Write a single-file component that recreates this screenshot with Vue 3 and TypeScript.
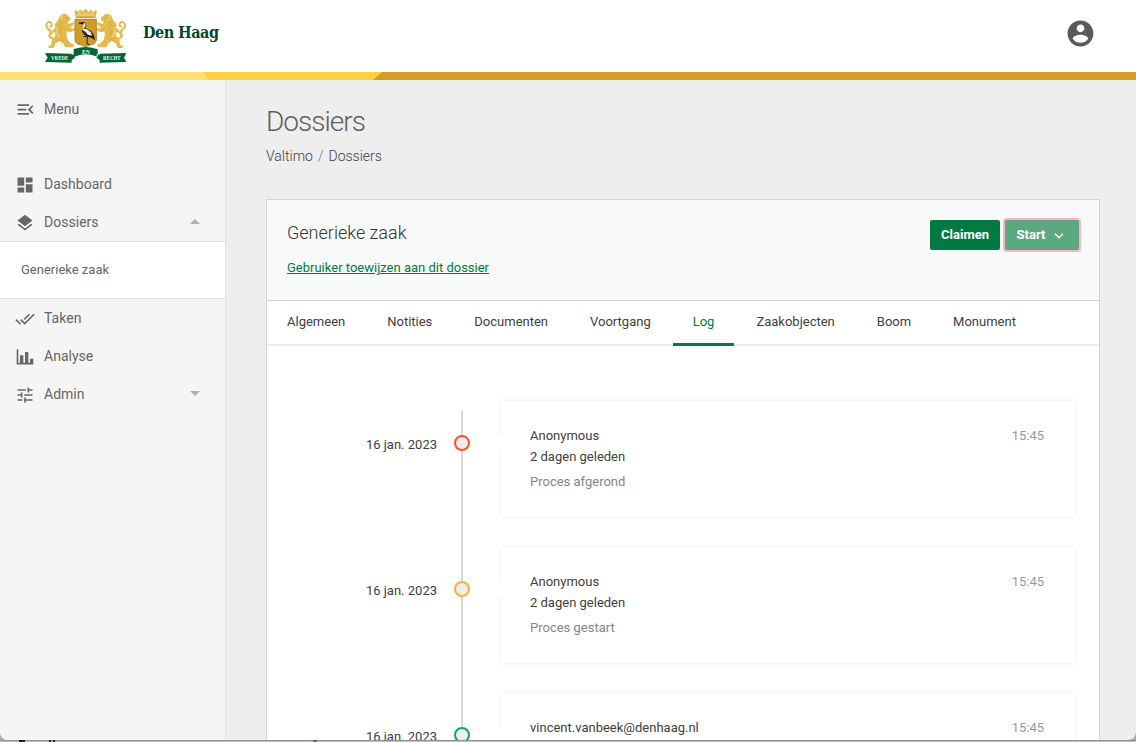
<script setup lang="ts">
interface NavItem { label: string; icon: string; arrow?: 'up' | 'down' }
interface LogEntry { date: string; user: string; ago?: string; text?: string; time: string; color: string }

const menuIcon = 'M21 15.61L19.59 17L14.58 12L19.59 7L21 8.39L17.44 12L21 15.61M3 6H16V8H3V6M3 13V11H13V13H3M3 18V16H16V18H3Z'
const topNav: NavItem[] = [
  { label: 'Dashboard', icon: 'M3 13h8V3H3v10zm0 8h8v-6H3v6zm10 0h8V11h-8v10zm0-18v6h8V3h-8z' },
  { label: 'Dossiers', icon: 'M11.99 18.54l-7.37-5.73L3 14.07l9 7 9-7-1.63-1.27-7.38 5.74zM12 16l7.36-5.73L21 9l-9-7-9 7 1.63 1.27L12 16z', arrow: 'up' },
]
const bottomNav: NavItem[] = [
  { label: 'Taken', icon: 'M18 7l-1.41-1.41-6.34 6.34 1.41 1.41L18 7zm4.24-1.41L11.66 16.17 7.48 12l-1.41 1.41L11.66 19l12-12-1.42-1.41zM.41 13.41L6 19l1.41-1.41L1.83 12 .41 13.41z' },
  { label: 'Analyse', icon: 'M22 21H2V3H4V19H6V10H10V19H12V6H16V19H18V14H22V21Z' },
  { label: 'Admin', icon: 'M3 17v2h6v-2H3zM3 5v2h10V5H3zm10 16v-2h8v-2h-8v-2h-2v6h2zM7 9v2H3v2h4v2h2V9H7zm14 4v-2H11v2h10zm-6-4h2V7h4V5h-4V3h-2v6z', arrow: 'down' },
]
const tabs = ['Algemeen', 'Notities', 'Documenten', 'Voortgang', 'Log', 'Zaakobjecten', 'Boom', 'Monument']
const activeTab = 'Log'
const entries: LogEntry[] = [
  { date: '16 jan. 2023', user: 'Anonymous', ago: '2 dagen geleden', text: 'Proces afgerond', time: '15:45', color: '#fb5125' },
  { date: '16 jan. 2023', user: 'Anonymous', ago: '2 dagen geleden', text: 'Proces gestart', time: '15:45', color: '#fbb031' },
  { date: '16 jan. 2023', user: 'vincent.vanbeek@denhaag.nl', time: '15:45', color: '#0da85c' },
]
</script>

<template>
  <div class="window">
    <div class="app">
      <header class="header">
        <div class="brand">
          <svg class="crest" viewBox="0 0 276 186" width="92" height="62">
            <defs>
              <g id="lion">
                <path fill="#e3bb4b" d="M56 42l4-10 9-6 10 1 5 6 8 6-2 8-7 3 2 7 8-2 7-5 3 5-6 8-11 6 9 2 10-2v7l-14 6-10-3-2 11 4 14 9 11 9 3v9H75l-5-11-13-9-11 9-5 13H26l-1-6 8-3 3-16 10-12-1-12-8 5-7 10-6 1 2-7 9-10 12-12-4-6z" />
                <path fill="none" stroke="#e3bb4b" stroke-width="6" d="M41 102C30 100 27 92 31 84C36 74 19 75 19 62C19 51 30 47 34 55C39 63 32 66 28 64" />
                <path fill="none" stroke="#c59c36" stroke-width="2" d="M60 43l8 9-9 8 8 10-8 9 7 12M75 38l7 3M48 111l15-9M82 73l14-5" />
                <path fill="none" stroke="#f6dc8b" stroke-width="3" d="M68 32l-5 9 7 6M52 67l-2 17 8 12" />
              </g>
            </defs>
            <use href="#lion" />
            <use href="#lion" transform="translate(274 0) scale(-1 1)" />
            <path fill="#e1b744" d="M108 39l-5-20 6-3 6 6 5-9 7 7 10-8 10 8 7-7 5 9 6-6 6 3-5 20z" />
            <path fill="none" stroke="#fbf0cf" stroke-width="2" d="M111 30h52M114 24h9M129 24h6M140 24h6M152 24h9" />
            <path fill="none" stroke="#b98f31" stroke-width="2" d="M107 37h60" />
            <path fill="#d09c29" stroke="#af8527" stroke-width="3" d="M105 43h64v62q0 8-9 12l-17 5-6 6-6-6-17-5q-9-4-9-12z" />
            <path fill="#151d1b" d="M116 54l14-3 7 3 2 9-5 6 8 3 12 7 8 12 3 16-9-8-13-4-12-7-5-9 3-10 4-4-3-6z" />
            <path fill="#f3eee0" d="M129 54l7 1 1 8-7 8 10 1 12 9 5 11-14-3-11-8-5-8 3-11z" />
            <path fill="none" stroke="#151d1b" stroke-width="3" d="M116 54l15 1M127 77l11 6 4 10-12 2M142 91l-1 25 7 3" />
            <path fill="#006633" d="M101 132l17-4q19-4 38 0l17 5v22l-20-6q-16-3-31 0l-21 7zM15 144l80 2v27l-80-2 8-13zM179 146l80-2-7 14 7 13-80 2zM95 149l9-2v12l-9 6zM179 149l-9-2v12l9 6z" />
            <g fill="#edf4e8" font-family="'Liberation Serif', serif" font-weight="700">
              <text x="33" y="166" font-size="20" textLength="52" lengthAdjust="spacingAndGlyphs">VREDE</text>
              <text x="126" y="148" font-size="19" textLength="24" lengthAdjust="spacingAndGlyphs">EN</text>
              <text x="189" y="166" font-size="20" textLength="53" lengthAdjust="spacingAndGlyphs">RECHT</text>
            </g>
          </svg>
          <span class="brand-name">Den Haag</span>
        </div>
        <svg class="account" viewBox="0 0 24 24"><path d="M12 2C6.48 2 2 6.48 2 12s4.48 10 10 10 10-4.48 10-10S17.52 2 12 2zm0 3c1.66 0 3 1.34 3 3s-1.34 3-3 3-3-1.34-3-3 1.34-3 3-3zm0 14.2c-2.5 0-4.71-1.28-6-3.22.03-1.99 4-3.08 6-3.08 1.99 0 5.97 1.09 6 3.08-1.29 1.94-3.5 3.22-6 3.22z" /></svg>
      </header>
      <svg class="stripe" viewBox="0 0 1136 8" width="1136" height="8">
        <rect width="1136" height="8" fill="#d49e26" />
        <path d="M0 0H382L373 8H0Z" fill="#ffd043" />
        <path d="M0 0H203L208 8H0Z" fill="#ffde73" />
      </svg>
      <div class="body">
        <aside class="sidebar">
          <div class="nav-item menu-toggle">
            <svg class="nav-icon" viewBox="0 0 24 24"><path :d="menuIcon" /></svg><span>Menu</span>
          </div>
          <div v-for="item in topNav" :key="item.label" class="nav-item">
            <svg class="nav-icon" viewBox="0 0 24 24"><path :d="item.icon" /></svg>
            <span>{{ item.label }}</span>
            <i v-if="item.arrow" class="caret" :class="item.arrow"></i>
          </div>
          <div class="submenu">Generieke zaak</div>
          <div v-for="item in bottomNav" :key="item.label" class="nav-item">
            <svg class="nav-icon" viewBox="0 0 24 24"><path :d="item.icon" /></svg>
            <span>{{ item.label }}</span>
            <i v-if="item.arrow" class="caret" :class="item.arrow"></i>
          </div>
        </aside>
        <main class="content">
          <h1>Dossiers</h1>
          <nav class="crumbs"><span>Valtimo</span><span class="slash">/</span><span>Dossiers</span></nav>
          <section class="panel">
            <div class="panel-head">
              <div>
                <h2>Generieke zaak</h2>
                <a class="assign">Gebruiker toewijzen aan dit dossier</a>
              </div>
              <div class="actions">
                <button class="btn">Claimen</button>
                <button class="btn start">Start<svg width="10" height="6" viewBox="0 0 10 6"><path d="M1 .8L5 4.8L9 .8" fill="none" stroke="#fff" stroke-width="1.4" /></svg></button>
              </div>
            </div>
            <div class="tabs">
              <span v-for="tab in tabs" :key="tab" class="tab" :class="{ active: tab === activeTab }">{{ tab }}</span>
            </div>
            <div class="timeline">
              <div v-for="(entry, i) in entries" :key="i" class="entry">
                <span class="date">{{ entry.date }}</span>
                <div class="rail"><span class="dot" :style="{ borderColor: entry.color }"></span></div>
                <article class="card">
                  <div>
                    <p class="user">{{ entry.user }}</p>
                    <p v-if="entry.ago" class="ago">{{ entry.ago }}</p>
                    <p v-if="entry.text" class="text">{{ entry.text }}</p>
                  </div>
                  <span class="time">{{ entry.time }}</span>
                </article>
              </div>
            </div>
          </section>
        </main>
      </div>
    </div>
    <svg class="under" viewBox="0 0 1136 2" width="1136" height="2">
      <rect width="1136" height="1" fill="#929292" /><rect y="1" width="1136" height="1" fill="#bdbdbd" />
      <path d="M19 0h6v2h-6zM49 0h2v2h-2zM53 0h2v2h-2z" fill="#222" /><path d="M313 0h4v2h-4z" fill="#b34848" />
    </svg>
  </div>
</template>

<style>
html, body { margin: 0; overflow: hidden; }
</style>

<style scoped>
* { box-sizing: border-box; }
.window { width: 1136px; height: 742px; overflow: hidden; background: #aaa; font-family: Roboto, "Liberation Sans", sans-serif; color: #404040; font-size: 13px; }
.app { height: 740px; display: flex; flex-direction: column; overflow: hidden; background: #eee; border-radius: 0 0 8px 8px; }
.header { height: 72px; flex: none; background: #fff; display: flex; justify-content: space-between; padding: 5px 40.5px 0 40px; }
.brand { display: flex; }
.crest { display: block; }
.brand-name { margin-left: 11px; padding-top: 17px; font: 700 16px/22px "DejaVu Serif Condensed", "DejaVu Serif", serif; color: #00492d; letter-spacing: -.5px; white-space: nowrap; }
.account { width: 31px; height: 31px; margin-top: 13px; fill: #595959; }
.stripe { display: block; flex: none; }
.body { flex: 1; display: flex; min-height: 0; }
.sidebar { width: 226px; flex: none; background: #f5f5f5; border-right: 1px solid #e3e3e3; padding-top: 10px; color: #666; }
.nav-item { height: 38px; display: flex; align-items: center; padding: 0 25.5px 0 15px; font-size: 14px; letter-spacing: .02px; }
.nav-item span { margin-left: 9px; }
.menu-toggle { margin-bottom: 37px; }
.nav-icon { width: 20px; height: 20px; margin-top: 1px; fill: #666; }
.menu-toggle .nav-icon { width: 21px; height: 21px; margin-right: -1px; }
.caret { margin-left: auto; margin-top: -1px; border: 5px solid transparent; border-top: 0; border-bottom-color: #b0b0b0; }
.caret.down { border-top: 5px solid #b0b0b0; border-bottom: 0; }
.submenu { height: 58px; background: #fff; border: solid #e2e2e2; border-width: 1px 0; padding-left: 21px; line-height: 56px; font-size: 13px; }
.content { padding: 24px 36px 0 40px; width: 910px; }
h1 { margin: 0; font-size: 28px; line-height: 36px; font-weight: 300; letter-spacing: -1px; color: #5e5e5e; }
.crumbs { display: flex; margin-top: 6px; font-size: 14px; font-weight: 300; line-height: 20px; color: #404040; }
.slash { margin: 0 5px; color: #777; }
.panel { margin-top: 33px; width: 834px; height: 700px; background: #fff; border: 1px solid #d4d4d4; }
.panel-head { height: 101px; background: #f8faf9; border-bottom: 1px solid #d4d4d4; display: flex; justify-content: space-between; padding: 20px 20px 0 20px; }
h2 { margin: 0; font-size: 18px; font-weight: 300; line-height: 26px; color: #333; }
.assign { display: block; margin-top: 14px; line-height: 16px; color: #007a41; text-decoration: underline; }
.actions { display: flex; gap: 5px; }
.btn { height: 30px; width: 70px; padding: 0 0 1px; border: 0; border-radius: 2px; background: #007a41; color: #fff; font: 700 13px Roboto, sans-serif; }
.start { width: 74px; background: #5ca881; box-shadow: 0 0 0 2px #ffb0c4; display: flex; align-items: center; justify-content: center; gap: 9px; padding-right: 3px; }
.start svg { margin-top: 2px; }
.tabs { height: 45px; display: flex; gap: 2px; box-shadow: inset 0 -2px #ebebeb; }
.tab { padding: 12px 20px 0; line-height: 18px; white-space: nowrap; height: 45px; }
.tab.active { color: #007a41; border-bottom: 3px solid #007a41; }
.timeline { padding-top: 54px; }
.entry { display: flex; height: 146px; }
.date { width: 170px; text-align: right; padding-top: 36px; line-height: 18px; }
.rail { width: 50px; position: relative; display: flex; justify-content: center; padding-top: 35px; }
.rail::before { content: ''; position: absolute; left: 24px; top: 0; bottom: 0; width: 2px; background: #d8d8d8; }
.entry:first-child .rail::before { top: 11px; }
.dot { position: relative; width: 16px; height: 16px; border: 2px solid; border-radius: 50%; background: #eee; }
.card { position: relative; margin: 1px 0 0 14px; width: 574px; height: 116px; padding: 26px 31px 0 29px; border-radius: 3px; background: #fff; box-shadow: 0 0 4px rgba(0, 0, 0, .09); display: flex; justify-content: space-between; }
.card::before { content: ''; position: absolute; left: -5px; top: 35px; width: 7px; height: 14px; background: #fff; }
p { margin: 0; line-height: 18px; }
.ago { margin-top: 3px; }
.text { margin-top: 7px; color: #858585; }
.time { line-height: 18px; color: #999; }
.under { display: block; }
</style>
